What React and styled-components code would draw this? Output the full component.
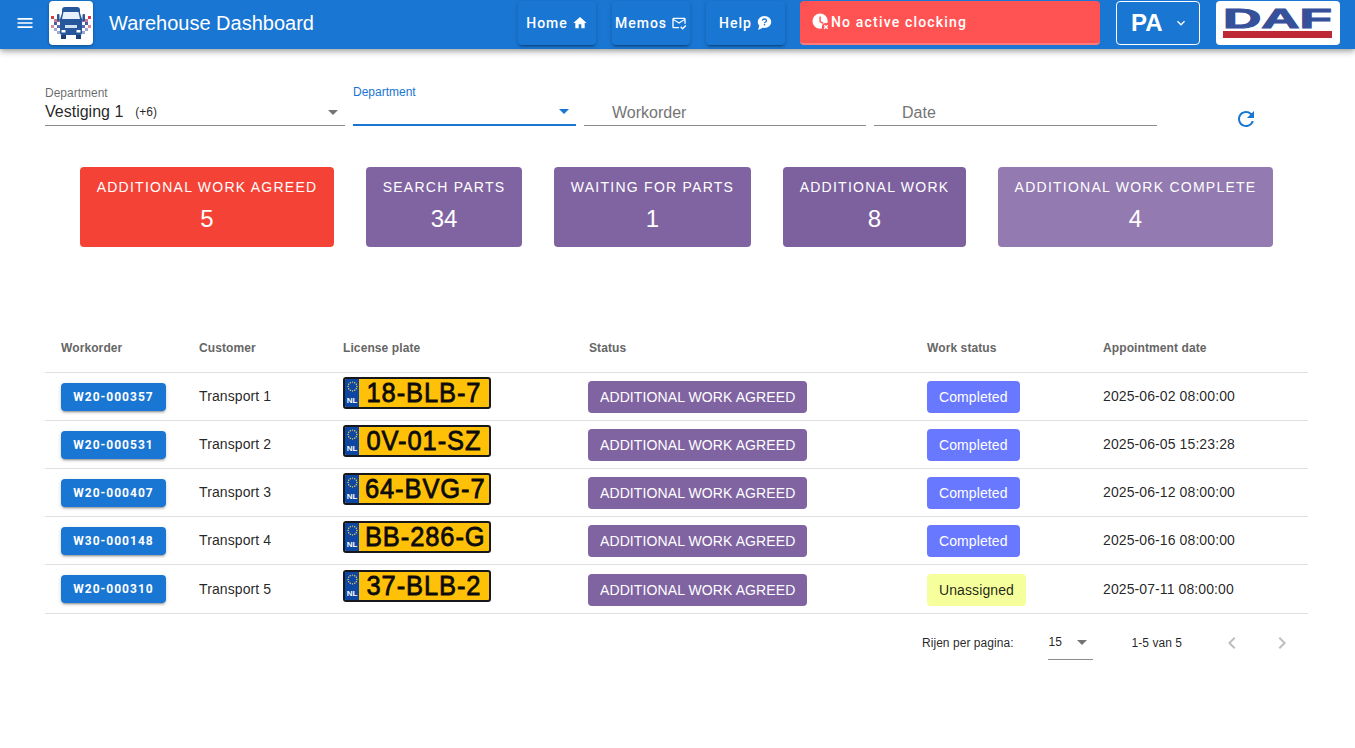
import React from "react";
import styled, { createGlobalStyle } from "styled-components";
import {
  MdMenu,
  MdHome,
  MdOutlineMarkEmailRead,
  MdKeyboardArrowDown,
  MdArrowDropDown,
  MdRefresh,
  MdChevronLeft,
  MdChevronRight,
} from "react-icons/md";

const cards = [
  { title: "Additional work agreed", count: 5, width: 254, tone: "#f44336" },
  { title: "Search parts", count: 34, width: 156, tone: "#8064a2" },
  { title: "Waiting for parts", count: 1, width: 197, tone: "#8064a2" },
  { title: "Additional work", count: 8, width: 183, tone: "#7d619f" },
  { title: "Additional work complete", count: 4, width: 275, tone: "#937ab0" },
];

const rows = [
  { order: "W20-000357", customer: "Transport 1", plate: "18-BLB-7", work: "Completed", date: "2025-06-02 08:00:00" },
  { order: "W20-000531", customer: "Transport 2", plate: "0V-01-SZ", work: "Completed", date: "2025-06-05 15:23:28" },
  { order: "W20-000407", customer: "Transport 3", plate: "64-BVG-7", work: "Completed", date: "2025-06-12 08:00:00" },
  { order: "W30-000148", customer: "Transport 4", plate: "BB-286-G", work: "Completed", date: "2025-06-16 08:00:00" },
  { order: "W20-000310", customer: "Transport 5", plate: "37-BLB-2", work: "Unassigned", date: "2025-07-11 08:00:00" },
];

const columns = [
  { name: "Workorder", width: 138 },
  { name: "Customer", width: 144 },
  { name: "License plate", width: 246 },
  { name: "Status", width: 338 },
  { name: "Work status", width: 176 },
  { name: "Appointment date", width: 221 },
];

const GlobalStyle = createGlobalStyle`
  html, body {
    margin: 0;
    background: #fff;
    font-family: "Liberation Sans", Arial, sans-serif;
    color: rgba(0, 0, 0, 0.87);
  }
  * { box-sizing: border-box; }
`;

const Bar = styled.header`
  height: 49px;
  background: #1976d2;
  display: flex;
  align-items: flex-start;
  padding: 1px 15px 0 15px;
  box-shadow: 0 2px 4px -1px rgba(0,0,0,.2), 0 4px 5px 0 rgba(0,0,0,.14), 0 1px 10px 0 rgba(0,0,0,.12);
  color: #fff;
`;

const MenuButton = styled.div`
  width: 20px;
  height: 44px;
  margin-right: 14px;
  display: flex;
  align-items: center;
  justify-content: center;
  font-size: 24px;
`;

const LogoBox = styled.div`
  width: 44px;
  height: 44px;
  background: #fff;
  border-radius: 4px;
  box-shadow: 0 1px 3px rgba(0,0,0,.35);
  flex: none;
`;

const Title = styled.h1`
  margin: 0 0 0 16px;
  width: 409px;
  font-size: 20px;
  font-weight: 400;
  line-height: 44px;
`;

const NavButton = styled.button`
  width: ${(p) => p.$width}px;
  height: 44px;
  margin-right: 16px;
  padding: 0;
  border: 0;
  border-radius: 4px;
  background: #1976d2;
  color: #fff;
  font: 500 14px Roboto, sans-serif;
  letter-spacing: 1px;
  display: flex;
  align-items: center;
  justify-content: center;
  gap: 4px;
  box-shadow: 0 3px 1px -2px rgba(0,0,0,.2), 0 2px 2px 0 rgba(0,0,0,.14), 0 1px 5px 0 rgba(0,0,0,.12);
  svg { font-size: 16px; }
`;

const ClockAlert = styled.div`
  width: 300px;
  height: 44px;
  margin-left: -1px;
  margin-right: 16px;
  padding-left: 12px;
  border-radius: 4px;
  border-bottom: 2px solid #ff7b7b;
  background: #ff5252;
  color: #fff;
  font-family: Roboto, sans-serif;
  font-size: 14px;
  font-weight: 500;
  letter-spacing: 1.17px;
  display: flex;
  align-items: center;
  gap: 1px;
`;

const UserBox = styled.div`
  width: 84px;
  height: 44px;
  margin-right: 16px;
  border: 1px solid #fff;
  border-radius: 4px;
  display: flex;
  align-items: center;
  padding-left: 14px;
  font-size: 24px;
  font-weight: 700;
  svg { font-size: 16px; margin-left: 10px; }
`;

const BrandBox = styled.div`
  width: 124px;
  height: 44px;
  background: #fff;
  border-radius: 4px;
  flex: none;
`;

const Main = styled.main`
  padding: 36px 47px 0 45px;
`;

const Filters = styled.section`
  display: flex;
  gap: 8px;
  align-items: flex-start;
`;

const Field = styled.div`
  width: ${(p) => p.$width}px;
  height: 41px;
  border-bottom: ${(p) => (p.$active ? "2px solid #1976d2" : "1px solid #8c8c8c")};
  display: flex;
  flex-direction: column;
  justify-content: flex-end;
`;

const FieldLabel = styled.label`
  font-size: 12px;
  line-height: 14px;
  color: ${(p) => (p.$active ? "#1976d2" : "rgba(0,0,0,.6)")};
`;

const FieldValue = styled.div`
  height: 25px;
  display: flex;
  align-items: center;
  font-size: 16px;
  padding-bottom: 2px;
  svg {
    margin-left: auto;
    font-size: 24px;
    color: ${(p) => (p.$active ? "#1976d2" : "#757575")};
  }
`;

const Extra = styled.span`
  font-size: 12px;
  margin-left: 12px;
`;

const Placeholder = styled.div`
  height: 25px;
  padding-left: 28px;
  font-size: 16px;
  line-height: 25px;
  color: #757575;
`;

const RefreshButton = styled.div`
  margin: 22px 0 0 69px;
  color: #1976d2;
  font-size: 24px;
  line-height: 0;
`;

const Cards = styled.section`
  display: flex;
  justify-content: center;
  gap: 32px;
  margin: 36px 0 0 35px;
  padding-right: 35px;
`;

const Card = styled.div`
  width: ${(p) => p.$width}px;
  height: 80px;
  border-radius: 4px;
  background: ${(p) => p.$tone};
  color: #fff;
  text-align: center;
  padding-top: 12px;
`;

const CardTitle = styled.div`
  font-size: 14px;
  line-height: 16px;
  letter-spacing: 1.25px;
  text-transform: uppercase;
`;

const CardCount = styled.div`
  margin-top: 8px;
  font-size: 24px;
  line-height: 32px;
`;

const Table = styled.table`
  margin-top: 87px;
  width: 1263px;
  border-collapse: collapse;
  table-layout: fixed;
  font-size: 14px;
  letter-spacing: 0.1px;
`;

const HeadCell = styled.th`
  height: 38px;
  padding: 0 16px 10px;
  text-align: left;
  font-size: 12px;
  font-weight: 700;
  color: #666;
  border-bottom: 1px solid #e0e0e0;
`;

const Row = styled.tr`
  height: 48px;
  &:last-child { height: 49px; }
`;

const Cell = styled.td`
  padding: 0 16px;
  border-bottom: 1px solid #e0e0e0;
  white-space: nowrap;
`;

const PlateCell = styled(Cell)`
  padding: 0 0 6px 16px;
`;

const ChipCell = styled(Cell)`
  padding: 2px 0 0 15px;
`;

const WorkCell = styled(ChipCell)`
  padding-left: 16px;
`;

const OrderButton = styled.button`
  width: 105px;
  height: 28px;
  margin-top: 1px;
  padding: 0;
  border: 0;
  border-radius: 4px;
  background: #1976d2;
  color: #fff;
  font: 700 12px Roboto, sans-serif;
  letter-spacing: 1px;
  display: block;
  box-shadow: 0 3px 1px -2px rgba(0,0,0,.2), 0 2px 2px 0 rgba(0,0,0,.14), 0 1px 5px 0 rgba(0,0,0,.12);
`;

const Plate = styled.div`
  width: 148px;
  height: 32px;
  display: flex;
  border: 2px solid #16181d;
  border-radius: 3px;
  background: #ffc107;
  overflow: hidden;
`;

const PlateBand = styled.div`
  width: 14px;
  flex: none;
  background: #0d47a1;
  color: #fff;
  display: flex;
  flex-direction: column;
  align-items: center;
  justify-content: space-between;
  padding: 2px 0 2px;
  font-size: 8px;
  font-weight: 700;
  line-height: 9px;
  letter-spacing: 0;
`;

const PlateText = styled.div`
  flex: 1;
  text-align: center;
  font-size: 28px;
  line-height: 28px;
  letter-spacing: 1px;
  color: #0b0b0b;
  -webkit-text-stroke: 0.8px #0b0b0b;
  transform: scaleX(0.91);
`;

const Chip = styled.span`
  display: inline-flex;
  align-items: center;
  height: 32px;
  padding: 0 12px;
  border-radius: 4px;
  background: ${(p) => p.$bg};
  color: ${(p) => p.$fg};
`;

const Pagination = styled.footer`
  display: flex;
  align-items: center;
  height: 58px;
  width: 1263px;
  font-size: 12px;
  letter-spacing: 0.05px;
  padding-left: 877px;
`;

const PageSelect = styled.div`
  width: 45px;
  height: 31px;
  margin: 4px 39px 0 34px;
  padding: 0 0 4px 1px;
  display: flex;
  align-items: center;
  border-bottom: 1px solid #8c8c8c;
  svg { font-size: 24px; margin-left: auto; margin-right: -1px; color: #757575; }
`;

const PageArrows = styled.div`
  display: flex;
  gap: 26px;
  margin-left: 38px;
  color: rgba(0, 0, 0, 0.26);
  font-size: 24px;
  line-height: 0;
`;

function ClockIcon() {
  return (
    <svg width="18" height="18" viewBox="0 0 20 20">
      <circle cx="9" cy="9" r="8.5" fill="#fff" />
      <path d="M9 4v5.5l3.5 2" stroke="#ff5252" strokeWidth="1.6" fill="none" />
      <circle cx="15.5" cy="15.5" r="4.5" fill="#ff5252" />
      <path d="M13.5 13.5l4 4M17.5 13.5l-4 4" stroke="#fff" strokeWidth="1.5" />
    </svg>
  );
}

function HelpBubble() {
  return (
    <svg width="16" height="16" viewBox="0 0 16 16">
      <ellipse cx="8.5" cy="7" rx="6.8" ry="6" fill="#fff" />
      <path d="M3.5 10.5L2 15l5-2.2z" fill="#fff" />
      <path d="M6.4 5.6q.2-1.6 2.1-1.6t2 1.5q0 1-1 1.5t-1 1.3" stroke="#1976d2" strokeWidth="1.3" fill="none" />
      <rect x="7.8" y="9" width="1.4" height="1.4" fill="#1976d2" />
    </svg>
  );
}

function Checker({ x, flip }) {
  const cells = [
    [0, 0, "#d33a4c"], [3, 3, "#c77b92"], [6, 3, "#8d6f9e"], [3, 6, "#4f5d9f"],
    [6, 9, "#5d6cb0"], [9, 6, "#8d6f9e"], [9, 12, "#3b5a9f"], [6, 15, "#9fa6cf"],
    [0, 9, "#d98a9b"], [12, 9, "#3b5a9f"], [12, 15, "#6e78b5"], [3, 12, "#9fa6cf"],
  ];
  return cells.map(([cx, cy, fill], i) => (
    <rect key={i} x={flip ? x - cx - 3 : x + cx} y={15 + cy} width="3" height="3" fill={fill} />
  ));
}

function TruckLogo() {
  return (
    <svg width="44" height="44" viewBox="0 0 44 44">
      <Checker x={2} />
      <Checker x={42} flip />
      <path d="M13 9q0-3 3-3h12q3 0 3 3v3l2 6v14q0 2-2 2H13q-2 0-2-2V18l2-6z" fill="#27579b" />
      <path d="M14.5 11h15l1.5 7H13z" fill="#e8f0fa" />
      <rect x="8" y="13" width="2.5" height="7" rx="1" fill="#27579b" />
      <rect x="33.5" y="13" width="2.5" height="7" rx="1" fill="#27579b" />
      <rect x="16" y="24" width="12" height="3" fill="#cfe0f3" />
      <rect x="12.5" y="29" width="4" height="2.5" fill="#fff" />
      <rect x="27.5" y="29" width="4" height="2.5" fill="#fff" />
      <rect x="12" y="34" width="5" height="4" fill="#1c3f76" />
      <rect x="27" y="34" width="5" height="4" fill="#1c3f76" />
    </svg>
  );
}

function DafLogo() {
  return (
    <svg width="124" height="44" viewBox="0 0 124 44">
      <text
        x="7"
        y="27"
        textLength="109"
        lengthAdjust="spacingAndGlyphs"
        fontFamily="'Liberation Sans', sans-serif"
        fontWeight="700"
        fontSize="27"
        fill="#36509a"
        stroke="#36509a"
        strokeWidth="1"
      >
        DAF
      </text>
      <rect x="7" y="30" width="109" height="7" fill="#bd2a35" />
    </svg>
  );
}

function Stars() {
  const dots = Array.from({ length: 12 }, (_, i) => {
    const a = (i * Math.PI) / 6;
    return <circle key={i} cx={5.5 + 4.4 * Math.cos(a)} cy={5.5 + 4.4 * Math.sin(a)} r="0.7" fill="#ffd54f" />;
  });
  return <svg width="11" height="11" viewBox="0 0 11 11">{dots}</svg>;
}

export default function App() {
  return (
    <>
      <GlobalStyle />
      <Bar>
        <MenuButton><MdMenu /></MenuButton>
        <LogoBox><TruckLogo /></LogoBox>
        <Title>Warehouse Dashboard</Title>
        <NavButton $width={78}>Home <MdHome /></NavButton>
        <NavButton $width={78}>Memos <MdOutlineMarkEmailRead /></NavButton>
        <NavButton $width={79}>Help <HelpBubble /></NavButton>
        <ClockAlert><ClockIcon /> No active clocking</ClockAlert>
        <UserBox>PA <MdKeyboardArrowDown /></UserBox>
        <BrandBox><DafLogo /></BrandBox>
      </Bar>
      <Main>
        <Filters>
          <Field $width={300}>
            <FieldLabel>Department</FieldLabel>
            <FieldValue>Vestiging 1 <Extra>(+6)</Extra><MdArrowDropDown /></FieldValue>
          </Field>
          <Field $width={223} $active>
            <FieldLabel $active>Department</FieldLabel>
            <FieldValue $active><MdArrowDropDown /></FieldValue>
          </Field>
          <Field $width={282}><Placeholder>Workorder</Placeholder></Field>
          <Field $width={283}><Placeholder>Date</Placeholder></Field>
          <RefreshButton><MdRefresh /></RefreshButton>
        </Filters>
        <Cards>
          {cards.map((card) => (
            <Card key={card.title} $width={card.width} $tone={card.tone}>
              <CardTitle>{card.title}</CardTitle>
              <CardCount>{card.count}</CardCount>
            </Card>
          ))}
        </Cards>
        <Table>
          <colgroup>
            {columns.map((col) => <col key={col.name} width={col.width} />)}
          </colgroup>
          <thead>
            <tr>
              {columns.map((col) => <HeadCell key={col.name}>{col.name}</HeadCell>)}
            </tr>
          </thead>
          <tbody>
            {rows.map((row) => (
              <Row key={row.order}>
                <Cell><OrderButton>{row.order}</OrderButton></Cell>
                <Cell>{row.customer}</Cell>
                <PlateCell>
                  <Plate>
                    <PlateBand><Stars /><span>NL</span></PlateBand>
                    <PlateText>{row.plate}</PlateText>
                  </Plate>
                </PlateCell>
                <ChipCell><Chip $bg="#8064a2" $fg="#fff">ADDITIONAL WORK AGREED</Chip></ChipCell>
                <WorkCell>
                  {row.work === "Completed"
                    ? <Chip $bg="#6979ff" $fg="#fff">{row.work}</Chip>
                    : <Chip $bg="#f5ff9c" $fg="rgba(0,0,0,.87)">{row.work}</Chip>}
                </WorkCell>
                <Cell>{row.date}</Cell>
              </Row>
            ))}
          </tbody>
        </Table>
        <Pagination>
          <span>Rijen per pagina:</span>
          <PageSelect>15 <MdArrowDropDown /></PageSelect>
          <span>1-5 van 5</span>
          <PageArrows><MdChevronLeft /><MdChevronRight /></PageArrows>
        </Pagination>
      </Main>
    </>
  );
}
